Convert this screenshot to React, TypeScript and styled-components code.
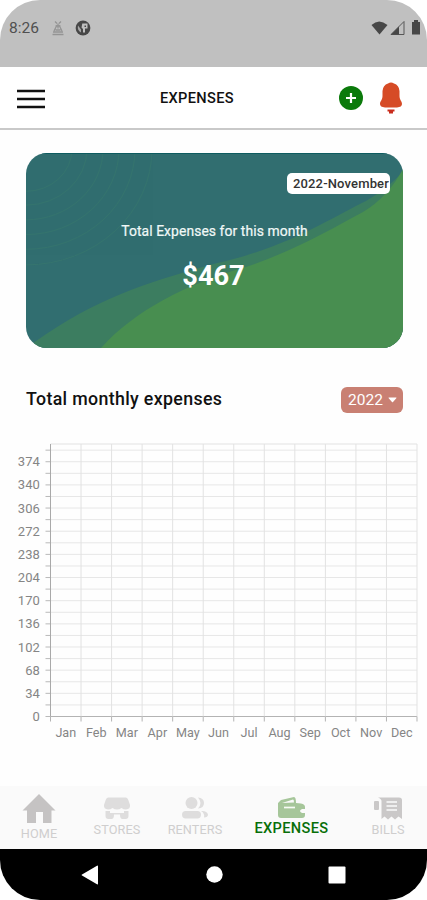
import React from "react";
import styled, { createGlobalStyle } from "styled-components";

const GlobalStyle = createGlobalStyle`
  * { box-sizing: border-box; }
  body { margin: 0; background: #fff; font-family: Roboto, "Liberation Sans", sans-serif; }
  svg { display: block; flex: none; }
`;

const Phone = styled.div`
  width: 427px;
  height: 900px;
  display: flex;
  flex-direction: column;
  overflow: hidden;
  background: #fefefe;
`;

const StatusWrap = styled.div`
  background: #fff;
  flex: none;
`;

const StatusBar = styled.div`
  height: 67px;
  background: #c0c0c0;
  border-radius: 40px 40px 0 0;
  display: flex;
  align-items: flex-start;
  justify-content: space-between;
  padding: 18px 6px 0 9px;
`;

const StatusGroup = styled.div<{ $gap: number }>`
  display: flex;
  align-items: center;
  gap: ${(p) => p.$gap}px;
  height: 19px;
`;

const Clock = styled.span`
  font-size: 15.5px;
  line-height: 19px;
  width: 31px;
  margin: 2px 1px 0 0;
  color: #505050;
  white-space: nowrap;
`;

const Header = styled.header`
  flex: none;
  height: 63px;
  background: #fff;
  border-bottom: 2px solid #c9c9c9;
  display: grid;
  grid-template-columns: 97px 1fr 97px;
  align-items: center;
  padding: 1px 0 0;
`;

const MenuButton = styled.button`
  border: 0;
  padding: 1px 0 0 17px;
  background: none;
`;

const Title = styled.h1`
  margin: 0;
  padding-right: 33px;
  text-align: center;
  font-size: 14.6px;
  line-height: 18px;
  font-weight: 500;
  letter-spacing: 0.35px;
  color: #111;
`;

const HeaderActions = styled.div`
  display: flex;
  align-items: center;
  gap: 16px;
  padding-left: 9px;
`;

const Content = styled.main`
  flex: 1;
  padding-top: 23px;
`;

const Card = styled.section`
  display: grid;
  width: 377px;
  height: 195px;
  margin-left: 26px;
  border-radius: 21px;
  overflow: hidden;
  > * { grid-area: 1 / 1; }
`;

const CardBody = styled.div`
  z-index: 1;
  display: flex;
  flex-direction: column;
  align-items: center;
  padding-top: 20px;
  color: #fff;
`;

const MonthField = styled.div`
  align-self: flex-end;
  width: 103px;
  height: 21px;
  margin-right: 13px;
  padding-left: 6px;
  border-radius: 5px;
  background: #fff;
  color: #333;
  font-size: 13px;
  line-height: 21px;
  font-weight: 500;
  letter-spacing: 0.15px;
  white-space: nowrap;
`;

const CardLabel = styled.div`
  margin-top: 28px;
  font-size: 13.9px;
  line-height: 18px;
  color: #f0f8f7;
  letter-spacing: 0.08px;
  -webkit-text-stroke: 0.2px #f0f8f7;
`;

const Amount = styled.div`
  margin-top: 20px;
  font-size: 27.2px;
  line-height: 32px;
  font-weight: 700;
  margin-right: 2px;
`;

const SectionHead = styled.div`
  display: flex;
  align-items: center;
  justify-content: space-between;
  height: 26px;
  margin: 39px 24px 0 26px;
`;

const SectionTitle = styled.h2`
  margin: 0;
  padding-bottom: 3px;
  font-size: 17.8px;
  line-height: 22px;
  font-weight: 500;
  letter-spacing: 0.34px;
  color: #111;
`;

const YearSelect = styled.button`
  display: flex;
  align-items: center;
  gap: 5px;
  width: 62px;
  height: 26px;
  padding: 0 0 0 7px;
  border: 0;
  border-radius: 6px;
  background: #c98073;
  color: #fff;
  font: 400 15.5px/26px Roboto, sans-serif;
`;

const Chart = styled.svg`
  margin-top: 22px;
  font-family: Roboto, sans-serif;
  font-size: 13px;
  fill: #858585;
`;

const TabBar = styled.nav`
  flex: none;
  height: 63px;
  background: #fafafa;
  display: grid;
  grid-template-columns: 78px 78px 78px 115px 78px;
  justify-items: center;
`;

const Tab = styled.div<{ $active?: boolean; $top: number }>`
  display: flex;
  flex-direction: column;
  align-items: center;
  padding-top: ${(p) => p.$top}px;
  color: ${(p) => (p.$active ? "#086f08" : "#cfcece")};
  font-weight: ${(p) => (p.$active ? 500 : 400)};
  font-size: ${(p) => (p.$active ? 14.6 : 12.7)}px;
  line-height: 17px;
  letter-spacing: ${(p) => (p.$active ? 0.35 : 0.1)}px;
`;

const SystemWrap = styled.div`
  flex: none;
  background: #fff;
`;

const SystemBar = styled.div`
  height: 51px;
  background: #000;
  border-radius: 0 0 40px 40px;
  display: grid;
  grid-template-columns: 152px 124px 151px;
  align-items: center;
  justify-items: center;
`;

const BackSlot = styled.div`
  padding-left: 27px;
`;

const RecentSlot = styled.div`
  padding-right: 29px;
`;

const months = ["Jan", "Feb", "Mar", "Apr", "May", "Jun", "Jul", "Aug", "Sep", "Oct", "Nov", "Dec"];
const PLOT = { left: 50.5, right: 417, top: 9, bottom: 281.5 };
const COL = (PLOT.right - PLOT.left) / 12;
const STEP = 11.58;

function MonthlyChart() {
  return (
    <Chart width="427" height="315" viewBox="0 0 427 315">
      <path d={`M${PLOT.left} ${PLOT.top}H${PLOT.right}`} stroke="#e2e2e2" />
      {Array.from({ length: 24 }, (_, i) => {
        const y = PLOT.bottom - i * STEP;
        return (
          <g key={i}>
            <path d={`M${PLOT.left} ${y}H${PLOT.right}`} stroke={i ? "#e7e7e7" : "#b3b3b3"} />
            <path d={`M45.5 ${y}H50.5`} stroke="#b9b9b9" />
            {i % 2 === 0 && (
              <text x="40" y={y + 4.5} textAnchor="end" letterSpacing="0.1">
                {i * 17}
              </text>
            )}
          </g>
        );
      })}
      {Array.from({ length: 13 }, (_, i) => {
        const x = PLOT.left + i * COL;
        return (
          <g key={i}>
            <path d={`M${x} ${PLOT.top}V${PLOT.bottom}`} stroke={i ? "#e2e2e2" : "#a9a9a9"} />
            <path d={`M${x} ${PLOT.bottom}v5`} stroke="#b3b3b3" />
          </g>
        );
      })}
      {months.map((m, i) => (
        <text key={m} x={PLOT.left + (i + 0.5) * COL} y="302" textAnchor="middle" fontSize="12.6">
          {m}
        </text>
      ))}
    </Chart>
  );
}

function CardArt() {
  return (
    <svg width="377" height="195" viewBox="0 0 377 195">
      <rect width="377" height="195" fill="#316e70" />
      <g fill="none" stroke="#3c7c6c" strokeWidth="1" opacity="0.45">
        {[46, 61, 77, 93, 109, 126].map((r) => (
          <ellipse key={r} cx="0" cy="-4" rx={r} ry={r * 0.92} />
        ))}
      </g>
      <path d="M10 188C70 146 116 131 187 111C262 95 306 64 340 48Q364 34 377 18V195H0Z" fill="#3c7d60" />
      <path d="M75 195C108 158 160 131 220 114C267 98 304 77 337 59Q362 44 377 16V195Z" fill="#488e50" />
      <path d="M16 .5H361" stroke="#0e5c60" />
    </svg>
  );
}

export default function App() {
  return (
    <Phone>
      <GlobalStyle />
      <StatusWrap>
        <StatusBar>
          <StatusGroup $gap={9}>
            <Clock>8:26</Clock>
            <svg width="16" height="17" viewBox="0 0 16 17" fill="none" stroke="#949494" strokeWidth="1.3">
              <path d="M5 2.500l2 2M11 2.500l-2 2M8 4.500v5M5.500 7h5M7 6l-3 6M9 6l3 6M5.500 11h5M3 13h10M2.500 15.500h11" />
            </svg>
            <svg width="16" height="16" viewBox="0 0 16 16">
              <circle cx="8" cy="8" r="7.4" fill="#474747" />
              <path d="M7.300 3.500H12.500V8.500H10V12.500H8V9L6.500 7.500Z" fill="#c0c0c0" />
              <path d="M9.500 5.500h1.500v1.500h-1.500z" fill="#474747" />
              <path d="M3 5.500L6 9.500V12.500Q2 10.500 3 5.500Z" fill="#a6a6a6" />
            </svg>
          </StatusGroup>
          <StatusGroup $gap={2}>
            <svg width="17" height="14" viewBox="0 0 17 14" fill="#474747">
              <path d="M.5 4Q8-3 16.5 4L8.5 13.5Z" />
            </svg>
            <svg width="15" height="14" viewBox="0 0 15 14" fill="#474747">
              <path d="M1 13.5L14 .5V13.5Z" fill="none" stroke="#565656" />
              <path d="M1 13.5L9 5.5V13.5Z" />
            </svg>
            <svg width="14" height="15" viewBox="0 0 14 15" fill="#474747">
              <path d="M7 0h4v2h2v12.5H5V2h2Z" />
            </svg>
          </StatusGroup>
        </StatusBar>
      </StatusWrap>

      <Header>
        <MenuButton aria-label="Menu">
          <svg width="28" height="20" viewBox="0 0 28 20" stroke="#111" strokeWidth="2.4">
            <path d="M0 2H28M0 10H28M0 18H28" />
          </svg>
        </MenuButton>
        <Title>EXPENSES</Title>
        <HeaderActions>
          <svg width="24" height="24" viewBox="0 0 24 24">
            <circle cx="12" cy="12" r="12" fill="#0b7a0b" />
            <path d="M12 7v10M7 12h10" stroke="#fff" strokeWidth="2.2" />
          </svg>
          <svg width="24" height="32" viewBox="0 0 24 32" fill="#d64b26">
            <path d="M9 1.500Q12-.5 15 1.500Q20 3 20.500 9V14C20.500 18 23 19 23 22Q23 25 18 25.500H6Q1 25 1 22C1 19 3.500 18 3.500 14V9Q4 3 9 1.500Z" />
            <path d="M8.500 27.500h7v2h-1.500v2h-4v-2h-1.500Z" fill="#c92d1d" />
          </svg>
        </HeaderActions>
      </Header>

      <Content>
        <Card>
          <CardArt />
          <CardBody>
            <MonthField>2022-November</MonthField>
            <CardLabel>Total Expenses for this month</CardLabel>
            <Amount>$467</Amount>
          </CardBody>
        </Card>
        <SectionHead>
          <SectionTitle>Total monthly expenses</SectionTitle>
          <YearSelect>
            2022
            <svg width="9" height="6" viewBox="0 0 9 6" fill="#fff">
              <path d="M1 .5h7q1 0 .3.8L5 5q-.5.6-1 0L.7 1.3Q0 .5 1 .5Z" />
            </svg>
          </YearSelect>
        </SectionHead>
        <MonthlyChart />
      </Content>

      <TabBar>
        <Tab $top={7}>
          <svg width="34" height="32" viewBox="0 0 34 32" fill="#c5c3c3">
            <path d="M17 1L33.500 17.500H29.500V30H21V19H14V30H5V17.500H.5Z" />
          </svg>
          HOME
        </Tab>
        <Tab $top={10}>
          <svg width="28" height="25" viewBox="0 0 28 25" fill="#dedddd">
            <path d="M5 1.500H23Q24.500 1.500 25.300 4L27 9Q27.500 13 23 13.500Q20.500 13.500 18.500 12Q14 15 9.500 12Q7.500 13.500 5 13.500Q.5 13 1 9L2.700 4Q3.500 1.500 5 1.500Z" />
            <path d="M2.500 15H7V17H21V15H25.500V20Q25.500 23 22.500 23H19.500Q17 23 17 18.500H11Q11 23 8.500 23H5.500Q2.500 23 2.500 20Z" />
          </svg>
          STORES
        </Tab>
        <Tab $top={10}>
          <svg width="28" height="25" viewBox="0 0 28 25" fill="#dedddd">
            <circle cx="10.500" cy="7" r="6" />
            <path d="M17 1.500Q23 2 23 7T17 12.500Q22 7 17 1.500Z" />
            <rect x="1" y="15" width="19" height="7.500" rx="3.700" />
            <path d="M20 15q6-.5 7 3.500q0 3-4 3q1-4-3-6.500Z" />
          </svg>
          RENTERS
        </Tab>
        <Tab $active $top={10}>
          <svg width="29" height="24" viewBox="0 0 29 24">
            <path d="M1 7L4 4L17 1Q19 1 19 7L24 7.500Q28 8 28 11V13H25Q21 15 25 17H28V19Q28 22 25 22H4Q1 22 1 19Z" fill="#a6c69a" />
            <path d="M5 7L16 3.500Q17 3.500 17 6.500Z" fill="#fafafa" />
            <path d="M7 11.500H18" stroke="#f8fbf6" strokeWidth="1.700" />
          </svg>
          EXPENSES
        </Tab>
        <Tab $top={10}>
          <svg width="30" height="25" viewBox="0 0 30 25" fill="#cac8c8">
            <rect x="1" y="5" width="5" height="9" rx="1" />
            <path d="M5 1.500H26Q29 1.500 29 4V23L25.500 20.500L22 23.500L18.500 20.500L15 23.500L11.500 20.500L8.500 23V5Q8.500 3 5 1.500Z" />
            <path d="M13.500 6H24M13.500 10H24M13.500 14H24" stroke="#fafafa" strokeWidth="1.700" />
          </svg>
          BILLS
        </Tab>
      </TabBar>

      <SystemWrap>
        <SystemBar>
          <BackSlot>
            <svg width="18" height="20" viewBox="0 0 18 20" fill="#fff">
              <path d="M16 .7Q17 0 17 1.500V18.500Q17 20 16 19.300L1 10.500Q0 10 1 9.500Z" />
            </svg>
          </BackSlot>
          <svg width="17" height="17" viewBox="0 0 17 17" fill="#fff">
            <circle cx="8.500" cy="8.500" r="8.200" />
          </svg>
          <RecentSlot>
            <svg width="18" height="18" viewBox="0 0 18 18" fill="#fff">
              <rect x=".5" y=".5" width="17" height="17" rx="1" />
            </svg>
          </RecentSlot>
        </SystemBar>
      </SystemWrap>
    </Phone>
  );
}
